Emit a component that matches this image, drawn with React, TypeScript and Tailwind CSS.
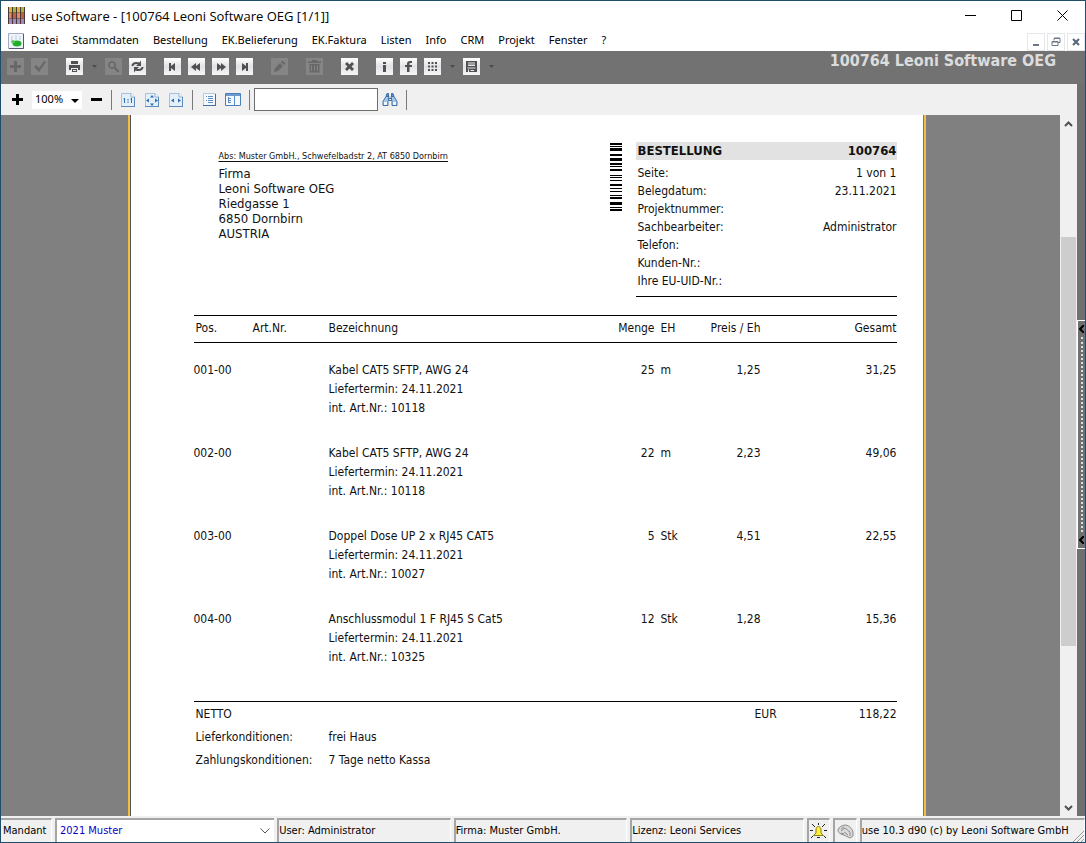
import type { ReactNode } from 'react';

const menuItems = ['Datei', 'Stammdaten', 'Bestellung', 'EK.Belieferung', 'EK.Faktura', 'Listen', 'Info', 'CRM', 'Projekt', 'Fenster', '?'];

const headerFields = [
  { label: 'Seite:', value: '1 von 1' },
  { label: 'Belegdatum:', value: '23.11.2021' },
  { label: 'Projektnummer:', value: '' },
  { label: 'Sachbearbeiter:', value: 'Administrator' },
  { label: 'Telefon:', value: '' },
  { label: 'Kunden-Nr.:', value: '' },
  { label: 'Ihre EU-UID-Nr.:', value: '' },
];

const positions = [
  { pos: '001-00', name: 'Kabel CAT5 SFTP, AWG 24', date: '24.11.2021', art: '10118', qty: '25', unit: 'm', price: '1,25', total: '31,25' },
  { pos: '002-00', name: 'Kabel CAT5 SFTP, AWG 24', date: '24.11.2021', art: '10118', qty: '22', unit: 'm', price: '2,23', total: '49,06' },
  { pos: '003-00', name: 'Doppel Dose UP 2 x RJ45 CAT5', date: '24.11.2021', art: '10027', qty: '5', unit: 'Stk', price: '4,51', total: '22,55' },
  { pos: '004-00', name: 'Anschlussmodul 1 F RJ45 S Cat5', date: '24.11.2021', art: '10325', qty: '12', unit: 'Stk', price: '1,28', total: '15,36' },
];

// [offset, thickness] of every bar
const bars = [
  [1, 2], [4, 1], [6, 3], [12, 2], [16, 3], [21, 2], [24, 1], [27, 2], [33, 1], [35, 1], [38, 1],
  [42, 2], [46, 1], [49, 1], [53, 1], [55, 2], [60, 3], [65, 1], [67, 2],
];

const icons: Record<string, ReactNode> = {
  plus: <path d="M7 3h3v4h4v3h-4v4H7v-4H3V7h4z" />,
  check: <path d="M3 9l2-2 3 3 5-7 2 1-7 10z" />,
  print: <path fillRule="evenodd" d="M5 3h7v3H5zM3 7h11v5h-2v-2H5v2H3zM6 11h5v3H6zM7 12v1h3v-1z" />,
  search: <path fillRule="evenodd" d="M7 3a4 4 0 0 1 3.4 6.1l4 4-1.5 1.5-4-4A4 4 0 1 1 7 3zm0 1.700a2.300 2.300 0 1 0 0 4.600 2.300 2.300 0 0 0 0-4.600z" />,
  refresh: <path d="M2.500 8c0-3.500 4-5 8-3.500L12 2.500V8H7l1.800-1.800C6.500 5.500 4.500 6.500 4.500 8zM14.500 9c0 3.500-4 5-8 3.500L5 14.500V9h5l-1.800 1.800c2.300.7 4.300-.3 4.300-1.800z" />,
  first: <path d="M5 5h2v3l4-3v8l-4-3v3H5z" />,
  prev: <path d="M3 9l5-4v3l4-3v8l-4-3v3z" />,
  next: <path d="M14 9l-5-4v3L5 5v8l4-3v3z" />,
  last: <path d="M12 5h-2v3L6 5v8l4-3v3h2z" />,
  pencil: <path d="M3 14l1-4 5-5 3 3-5 5zM10 4l1.500-1.500 3 3L13 7z" />,
  trash: <path fillRule="evenodd" d="M6 2h5v1.500h4V5H2V3.500h4zM3.500 6h10v8.500h-10zM5 7.500V13h1V7.500zM8 7.500V13h1V7.500zM11 7.500V13h1V7.500z" />,
  close: <path d="M4 6l2-2 2.500 2.500L11 4l2 2-2.500 2.500L13 11l-2 2-2.500-2.500L6 13l-2-2 2.500-2.500z" />,
  info: <path d="M7 4h3v2H7zM7 7h3v7H7z" />,
  facebook: <path d="M7 14V9H5V7h2V6c0-2 1-3 3-3h2v2h-1.500C9.700 5 9.500 5.300 9.500 6v1H12v2H9.500v5z" />,
  grid: <path d="M4 4h2v2H4zM7.500 4h2v2h-2zM11 4h2v2h-2zM4 7.500h2v2H4zM7.500 7.500h2v2h-2zM11 7.500h2v2h-2zM4 11h2v2H4zM7.500 11h2v2h-2zM11 11h2v2h-2z" />,
  save: <path fillRule="evenodd" d="M3 3h11v11H3zM5 4.500v1h7v-1zM5 6.500v1.500h7V6.500zM4.500 9.500v1h8v-1zM5 11.500V14h1v-2.500zM7.500 12v1H11v-1z" />,
};

type ToolProps = { icon: string; label: string; off?: boolean };

const Tool = ({ icon, label, off }: ToolProps) => (
  <button
    type="button"
    aria-label={label}
    disabled={off}
    className={off ? 'w-[17px] h-[17px] bg-[#858585] text-[#686868]' : 'w-[17px] h-[17px] bg-gradient-to-b from-white via-[#e2e2e6] to-[#f6f6f6] text-[#505050]'}
  >
    <svg viewBox="0 0 17 17" className="block w-full h-full" fill="currentColor">{icons[icon]}</svg>
  </button>
);

const DropArrow = ({ label }: { label: string }) => (
  <button type="button" aria-label={label} className="w-2 h-4 flex items-center justify-center">
    <svg width="5" height="3" viewBox="0 0 5 3" fill="#4a4a4a"><path d="M0 0h5L2.500 3z" /></svg>
  </button>
);

const Group = ({ children }: { children: ReactNode }) => <div className="flex items-center gap-[7px]">{children}</div>;

const Sheet = ({ children }: { children: ReactNode }) => (
  <svg width="16" height="16" viewBox="0 0 16 16" fill="none">
    <path d="M1.500 1.500h9.500l3.500 3.500v9.500h-13z" fill="#e3effa" stroke="#a9c2dc" />
    <path d="M11 1.500V5h3.500" fill="#fff" stroke="#8fb0d3" />
    <path d="M1 14.500h14M14.500 5v10" stroke="#5e8abb" />
    {children}
  </svg>
);

const Divider = () => <div className="w-px h-5 bg-[#7a7a7a]" />;

const Field = ({ children, className }: { children: ReactNode; className: string }) => (
  <div className={`flex items-center border-l-2 border-t-2 border-[#a5a5a5] border-r border-r-white overflow-hidden whitespace-nowrap ${className}`}>
    {children}
  </div>
);

const Chevron = ({ up }: { up?: boolean }) => (
  <svg width="9" height="6" viewBox="0 0 9 6" fill="none" stroke="#505050" strokeWidth="2">
    <path d={up ? 'M1 5l3.500-3.500L8 5' : 'M1 1l3.500 3.500L8 1'} />
  </svg>
);

const TitleBar = () => (
  <header className="h-[29px] flex items-center justify-between bg-white pl-[7px]">
    <div className="flex items-center gap-[6px]">
      <svg width="17" height="17" viewBox="0 0 17 17">
        <path fill="#dcb63a" d="M0 0h17v6H0z" />
        <path fill="#c2603a" d="M0 6h17v5H0z" />
        <path fill="#a08ab8" d="M0 11h17v6H0z" />
        <path fill="#a3b545" d="M5 0h3v6H5zM13 0h3v6h-3z" />
        <path fill="#e08a6a" d="M9 6h3v5H9zM1 6h2v5H1z" />
        <path stroke="#4b3636" d="M4.500 0v17M8.500 0v17M12.500 0v17M16.500 0v17M.5 0v17" />
        <path stroke="#4b3636" strokeOpacity=".5" d="M0 5.500h17M0 11.500h17" />
      </svg>
      <h1 className="text-[13px] leading-5 font-['Open_Sans',sans-serif]">use Software - [100764 Leoni Software OEG [1/1]]</h1>
    </div>
    <div className="flex h-full">
      <button type="button" aria-label="Minimieren" className="w-[46px] flex items-center justify-center">
        <svg width="11" height="11" stroke="#000"><path d="M0 5.500h11" /></svg>
      </button>
      <button type="button" aria-label="Maximieren" className="w-[46px] flex items-center justify-center">
        <svg width="11" height="11" stroke="#000" fill="none"><path d="M.5.5h10v10H.5z" /></svg>
      </button>
      <button type="button" aria-label="Beenden" className="w-[46px] flex items-center justify-center">
        <svg width="11" height="11" stroke="#000"><path d="M.5.5l10 10M10.500.5l-10 10" /></svg>
      </button>
    </div>
  </header>
);

const MenuBar = () => (
  <nav className="h-[21px] flex items-center bg-white pl-[7px] text-[11px]">
    <svg width="16" height="16" viewBox="0 0 16 16" className="mr-[7px]">
      <path d="M.5.5h15v15H.5z" fill="#eef4fa" stroke="#a8a8c4" />
      <path d="M3 3h2v4H3zM7 2h2v5H7zM11 3h2v4h-2z" fill="#d5dff0" />
      <path d="M15.500 1v14.500H1" fill="none" stroke="#56567c" />
      <ellipse cx="9" cy="10.500" rx="4.500" ry="3" fill="#22ae2b" />
      <ellipse cx="5" cy="8.500" rx="2" ry="1.500" fill="#58c95c" />
    </svg>
    <div className="flex flex-1 gap-[14px]">
      {menuItems.map((item) => (
        <button key={item} type="button">{item}</button>
      ))}
    </div>
    <div className="flex gap-[2px] self-end">
      <button type="button" aria-label="Fenster minimieren" className="w-[18px] h-[18px] border border-gray-200 flex items-center justify-center">
        <svg width="10" height="10" stroke="#6b7788" strokeWidth="2"><path d="M2 8h6" /></svg>
      </button>
      <button type="button" aria-label="Fenster wiederherstellen" className="w-[18px] h-[18px] border border-gray-200 flex items-center justify-center">
        <svg width="10" height="10" fill="none" stroke="#6b7788"><path d="M3 3.500V1.500h6v4H7M3 1h6M1 4.500h6v4H1zM1 5h6" /></svg>
      </button>
      <button type="button" aria-label="Fenster schließen" className="w-[18px] h-[18px] border border-gray-200 flex items-center justify-center">
        <svg width="10" height="10" stroke="#56657a" strokeWidth="2"><path d="M2 2l6 6M8 2L2 8" /></svg>
      </button>
    </div>
  </nav>
);

const MainToolbar = () => (
  <div className="h-[33px] flex items-start justify-between bg-[#727272] pl-[6px] pr-[29px]">
    <div className="flex gap-[18px] pt-[7px]">
      <Group>
        <Tool icon="plus" label="Neu" off />
        <Tool icon="check" label="Übernehmen" off />
      </Group>
      <Group>
        <Tool icon="print" label="Drucken" />
        <DropArrow label="Druckoptionen" />
        <Tool icon="search" label="Suchen" off />
        <Tool icon="refresh" label="Aktualisieren" />
      </Group>
      <Group>
        <Tool icon="first" label="Erster" />
        <Tool icon="prev" label="Zurück" />
        <Tool icon="next" label="Weiter" />
        <Tool icon="last" label="Letzter" />
      </Group>
      <Tool icon="pencil" label="Bearbeiten" off />
      <Tool icon="trash" label="Löschen" off />
      <Tool icon="close" label="Schließen" />
      <Group>
        <Tool icon="info" label="Info" />
        <Tool icon="facebook" label="Facebook" />
        <Tool icon="grid" label="Module" />
        <DropArrow label="Modulauswahl" />
        <Tool icon="save" label="Speichern" />
        <DropArrow label="Speicheroptionen" />
      </Group>
    </div>
    <h2 className="text-base leading-5 font-bold text-[#dcdcdc] font-['DejaVu_Sans_Condensed','DejaVu_Sans',sans-serif]">100764 Leoni Software OEG</h2>
  </div>
);

const PreviewToolbar = () => (
  <div className="h-[31px] flex items-center bg-[#f0f0f0] pl-[10px] gap-2">
    <button type="button" aria-label="Vergrößern">
      <svg width="13" height="13" stroke="#000" strokeWidth="3"><path d="M6.500 1v11M1 6.500h11" /></svg>
    </button>
    <div className="relative w-[50px] flex">
      <select aria-label="Zoom" className="appearance-none w-full h-[18px] bg-white pl-[3px] text-[11px]">
        <option>100%</option>
      </select>
      <svg width="8" height="4" className="absolute right-[3px] top-2 pointer-events-none"><path d="M0 0h8L4 4z" /></svg>
    </div>
    <button type="button" aria-label="Verkleinern">
      <svg width="13" height="13" stroke="#000" strokeWidth="3"><path d="M1 6.500h11" /></svg>
    </button>
    <Divider />
    <button type="button" aria-label="Originalgröße">
      <Sheet><path d="M4.500 6v5M3.500 7h1M11.500 6v5M10.500 7h1M8 7v1.500M8 9.500V11" stroke="#2f6cb3" /></Sheet>
    </button>
    <button type="button" aria-label="Ganze Seite">
      <Sheet><path d="M8 3l2 2.500H6zM8 14l2-2.500H6zM2 8.500L5 6.500v4zM14 8.500L11 6.500v4z" fill="#2f6cb3" /></Sheet>
    </button>
    <button type="button" aria-label="Seitenbreite">
      <Sheet><path d="M3 8.500l3-2v4zM13 8.500l-3-2v4z" fill="#2f6cb3" /></Sheet>
    </button>
    <Divider />
    <button type="button" aria-label="Seitenansicht">
      <svg width="16" height="16" fill="none"><path d="M2.500 1.500h12v12h-12z" fill="#f4f8fd" stroke="#b4cae2" /><path d="M2 13.500h13M14.500 2v12" stroke="#3e6fa8" /><path d="M5 4.500h1M7 4.500h5M7 6.500h5M5 8.500h1M7 8.500h5M7 10.500h5" stroke="#5b8dc6" /></svg>
    </button>
    <button type="button" aria-label="Gliederung">
      <svg width="16" height="16" fill="none"><path d="M.5 1.500h15v12H.5z" fill="#f4f8fd" stroke="#4d7fb8" /><path d="M1 3h14" stroke="#6d9bd0" strokeWidth="2" /><path d="M9.500 4v9M3.500 5v6M3 6.500h3M4 8.500h2M4 10.500h2" stroke="#5b8dc6" /></svg>
    </button>
    <Divider />
    <input type="text" aria-label="Suchtext" className="w-[124px] h-[23px] -ml-1 bg-white border border-[#6e6e6e] px-1 text-[11px]" />
    <button type="button" aria-label="Text suchen" className="-ml-1">
      <svg width="16" height="16" viewBox="0 0 16 16" fill="#a9c8e8" stroke="#3d6ea6">
        <path d="M4 4.500L1 9.500v4h5v-4l1-5zM12 4.500l3 5v4h-5v-4l-1-5z" />
        <path d="M4 4.500l1-3h1.500v3zM12 4.500l-1-3H9.500v3z" fill="#5b8dc6" />
        <path d="M6.500 6.500h3M6.500 8.500h3" />
        <path d="M2 10h3v3H2zM11 10h3v3h-3z" fill="#eef6fd" stroke="none" />
      </svg>
    </button>
    <Divider />
  </div>
);

const Report = () => (
  <article className="w-[798px] shrink-0 bg-white border-x-2 border-[#f0bf45] shadow-[inset_1px_0_#555,inset_-1px_0_#777] pt-[27px] pl-[64px] pr-[27px] text-xs text-[#111] font-['DejaVu_Sans_Condensed','DejaVu_Sans',sans-serif]">
    <section className="flex">
      <address className="not-italic flex-1 pl-[25px] pt-2 text-[13px] leading-[15px]">
        <p className="text-[9px] leading-3 underline underline-offset-2 mb-1">Abs: Muster GmbH., Schwefelbadstr 2, AT 6850 Dornbirn</p>
        <p>Firma</p>
        <p>Leoni Software OEG</p>
        <p>Riedgasse 1</p>
        <p>6850 Dornbirn</p>
        <p>AUSTRIA</p>
      </address>
      <svg width="12" height="70" viewBox="0 0 12 70" className="mr-[14px]" role="img" aria-label="Barcode">
        {bars.map(([y, h]) => (
          <rect key={y} x="0" y={y} width="12" height={h} />
        ))}
      </svg>
      <div className="w-[261px] border-b border-black pb-[6px]">
        <h3 className="flex justify-between bg-[#e2e2e2] h-[18px] items-center pl-[2px] mb-1 font-bold text-[13px]">
          <span>BESTELLUNG</span>
          <span>100764</span>
        </h3>
        <dl>
          {headerFields.map((f) => (
            <div key={f.label} className="flex justify-between pl-[2px] leading-[18px]">
              <dt>{f.label}</dt>
              <dd>{f.value}</dd>
            </div>
          ))}
        </dl>
      </div>
    </section>

    <table className="w-full table-fixed mt-[18px]">
      <colgroup>
        <col className="w-[59px]" />
        <col className="w-[76px]" />
        <col />
        <col className="w-[60px]" />
        <col className="w-[34px]" />
        <col className="w-[72px]" />
        <col className="w-[136px]" />
      </colgroup>
      <thead>
        <tr className="border-y border-black h-[27px] [&>th]:font-normal [&>th]:pb-[3px]">
          <th className="text-left pl-[2px]">Pos.</th>
          <th className="text-left">Art.Nr.</th>
          <th className="text-left">Bezeichnung</th>
          <th className="text-right">Menge</th>
          <th className="text-left pl-[6px]">EH</th>
          <th className="text-right">Preis / Eh</th>
          <th className="text-right">Gesamt</th>
        </tr>
      </thead>
      <tbody>
        {positions.map((p) => (
          <tr key={p.pos} className="align-top leading-[19px] h-[83px] [&>td]:pt-[18px]">
            <td>{p.pos}</td>
            <td />
            <td>
              <p>{p.name}</p>
              <p>Liefertermin: {p.date}</p>
              <p>int. Art.Nr.: {p.art}</p>
            </td>
            <td className="text-right">{p.qty}</td>
            <td className="pl-[6px]">{p.unit}</td>
            <td className="text-right">{p.price}</td>
            <td className="text-right">{p.total}</td>
          </tr>
        ))}
      </tbody>
    </table>

    <section className="mt-[26px] border-t border-black pt-[1px] leading-[23px] pl-[2px]">
      <div className="flex">
        <span className="flex-1">NETTO</span>
        <span className="mr-[82px]">EUR</span>
        <span>118,22</span>
      </div>
      <div className="flex">
        <span className="w-[133px]">Lieferkonditionen:</span>
        <span>frei Haus</span>
      </div>
      <div className="flex">
        <span className="w-[133px]">Zahlungskonditionen:</span>
        <span>7 Tage netto Kassa</span>
      </div>
    </section>
  </article>
);

const ScrollBar = () => (
  <div className="w-[17px] flex flex-col bg-[#f0f0f0]">
    <button type="button" aria-label="Nach oben" className="h-[17px] flex items-center justify-center"><Chevron up /></button>
    <div className="flex-1 flex flex-col">
      <div className="grow-[105]" />
      <div className="grow-[409] mx-px bg-[#cdcdcd]" />
      <div className="grow-[153]" />
    </div>
    <button type="button" aria-label="Nach unten" className="h-[17px] flex items-center justify-center"><Chevron /></button>
  </div>
);

const SidePanel = () => (
  <aside className="w-2 bg-[#707070] flex flex-col">
    <div className="grow-[236]" />
    <button type="button" aria-label="Seitenleiste öffnen" className="h-[229px] flex flex-col items-center justify-between border-l border-y border-white py-1">
      <svg width="5" height="8" fill="none" stroke="#000" strokeWidth="2"><path d="M5 0L1 4l4 4" /></svg>
      <div className="flex-1 w-0 my-1 border-l-2 border-dotted border-[#cfe0ea]" />
      <svg width="5" height="8" fill="none" stroke="#000" strokeWidth="2"><path d="M5 0L1 4l4 4" /></svg>
    </button>
    <div className="grow-[268]" />
  </aside>
);

const StatusBar = () => (
  <footer className="h-[26px] flex gap-[3px] pt-[2px] bg-[#f0f0f0] text-[11px] font-['DejaVu_Sans_Condensed','DejaVu_Sans',sans-serif]">
    <label htmlFor="mandant" className="w-[51px] flex items-center border-t-2 border-r border-t-[#a5a5a5] border-r-white pl-[2px]">Mandant</label>
    <div className="relative flex-[221]">
      <select id="mandant" className="appearance-none w-full h-full bg-white border-l-2 border-t-2 border-[#a5a5a5] pl-[3px] text-[#0a00c8]">
        <option>2021 Muster</option>
      </select>
      <svg width="10" height="6" fill="none" stroke="#555" className="absolute right-1 top-[10px] pointer-events-none"><path d="M.5.5L5 5l4.500-4.500" /></svg>
    </div>
    <Field className="flex-[172]">User: Administrator</Field>
    <Field className="flex-[172]">Firma: Muster GmbH.</Field>
    <Field className="flex-[172]">Lizenz: Leoni Services</Field>
    <Field className="w-[23px] justify-center">
      <svg width="17" height="16" viewBox="0 0 17 16" fill="none" stroke="#222">
        <path d="M3.500 12.500L6 10V7c0-2 1-3.500 2.500-3.500S11 5 11 7v3l2.500 2.500z" fill="#ffee3c" stroke="#8a7d12" />
        <path d="M2 1l3 3M15 1l-3 3M0 7.500h3M14 7.500h3M1 15l2-2M16 15l-2-2M8.500 0v2M7 14.500h3" />
      </svg>
    </Field>
    <Field className="w-[24px] justify-center">
      <svg width="17" height="15" viewBox="0 0 17 15" fill="#dcdcdc" stroke="#8a8a8a">
        <path d="M1 6c1-3 4-5 8-5 4 1 6 4 7 7v4l-3 2-4-2-5-2c-2-1-3-2-3-4z" />
        <path d="M4 7l4-3 5 4v4M4 5l3-2M7 8l4 3M4 9l3 1" fill="none" />
      </svg>
    </Field>
    <Field className="flex-[224] justify-between">
      <span>use 10.3 d90 (c) by Leoni Software GmbH</span>
      <svg width="12" height="12" stroke="#999" className="self-end"><path d="M1 12L12 1M5 12l7-7M9 12l3-3" /></svg>
    </Field>
  </footer>
);

const App = () => {
  return (
    <div className="h-screen flex flex-col border border-[#1f4e6b] bg-[#707070] text-black font-['Noto_Sans',sans-serif]">
      <TitleBar />
      <MenuBar />
      <MainToolbar />
      <div className="flex-1 min-h-0 flex">
        <main className="flex-1 min-w-0 flex flex-col">
          <PreviewToolbar />
          <div className="flex-1 min-h-0 flex">
            <div className="flex-1 min-w-0 flex justify-center overflow-hidden bg-[#808080] pr-2">
              <Report />
            </div>
            <ScrollBar />
          </div>
        </main>
        <SidePanel />
      </div>
      <StatusBar />
    </div>
  );
};

export default App;
